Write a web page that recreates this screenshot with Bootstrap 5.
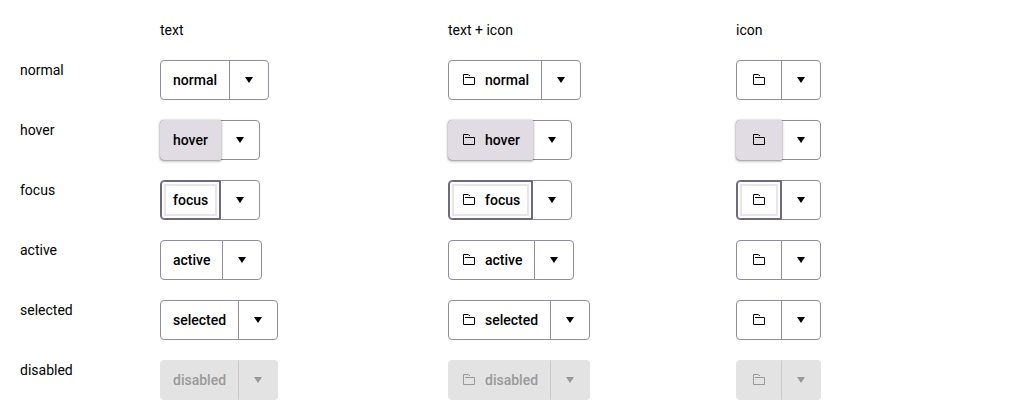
<!DOCTYPE html>
<html lang="en">
<head>
<meta charset="utf-8">
<meta name="viewport" content="width=device-width, initial-scale=1">
<title>Split button states</title>
<link href="https://cdn.jsdelivr.net/npm/bootstrap@5.3.0/dist/css/bootstrap.min.css" rel="stylesheet">
<style>
  body { font-family: Roboto, "Liberation Sans", sans-serif; font-size: 14px; line-height: 20px; color: #000; background: #fff; overflow: hidden; }
  .states { display: grid; grid-template-columns: 140px repeat(3, 288px); grid-template-rows: 20px repeat(6, 40px); gap: 20px 0; padding: 20px 0 0 20px; justify-items: start; }
  .split .btn {
    --bs-btn-font-size: 14px; --bs-btn-line-height: 20px; --bs-btn-font-weight: 500;
    --bs-btn-padding-x: 12px; --bs-btn-padding-y: 9px; --bs-btn-border-radius: 4px;
    --bs-btn-color: #000; --bs-btn-bg: #fff; --bs-btn-border-color: #908b9f;
    --bs-btn-disabled-color: #999; --bs-btn-disabled-bg: #e3e3e3; --bs-btn-disabled-border-color: #e3e3e3; --bs-btn-disabled-opacity: 1;
    height: 40px;
  }
  .split .btn-icon { --bs-btn-padding-x: 14px; }
  .split .toggle { --bs-btn-padding-x: 14px; width: 40px; }
  .split .is-hover { background: #e1dce3; border-color: #e1dce3; box-shadow: 0 0 1px rgba(0,0,0,.25), 0 1px 3px rgba(0,0,0,.45); z-index: 2; }
  .split .is-focus { border-color: #6e6880; box-shadow: inset 0 0 0 1px #6e6880, inset 0 0 0 3px #fff, inset 0 0 0 5px #e8e4ec; z-index: 2; }
  .split .toggle:disabled { border-left-color: #c9c9c9; }
  .split svg { display: block; flex: none; }
</style>
</head>
<body>
<svg width="0" height="0" class="position-absolute" aria-hidden="true">
  <symbol id="folder" viewBox="0 0 16 16"><path d="M4 5.5H13.5V12.5H2.5V2.5H7.3L8 3.5H9" fill="none" stroke="currentColor"/></symbol>
  <symbol id="caret" viewBox="0 0 10 16"><path d="M1 5H9L5 11Z" fill="currentColor"/></symbol>
</svg>
<main class="states" id="states">
  <div></div><div>text</div><div>text + icon</div><div>icon</div>
</main>
<script>
  const icon = '<svg width="16" height="16"><use href="#folder"/></svg>';
  const caret = '<svg width="10" height="16"><use href="#caret"/></svg>';
  const grid = document.getElementById('states');
  for (const state of ['normal', 'hover', 'focus', 'active', 'selected', 'disabled']) {
    const off = state === 'disabled' ? 'disabled' : '';
    const button = (content, extra) => `<div class="btn-group split">
      <button type="button" class="btn d-flex align-items-center gap-2 is-${state} ${extra}" ${off} aria-label="${state}">${content}</button>
      <button type="button" class="btn toggle d-flex align-items-center justify-content-center" ${off} aria-label="Menu">${caret}</button></div>`;
    grid.insertAdjacentHTML('beforeend', `<div>${state}</div>` +
      button(`<span>${state}</span>`, '') + button(`${icon}<span>${state}</span>`, '') + button(icon, 'btn-icon'));
  }
</script>
<script src="https://cdn.jsdelivr.net/npm/bootstrap@5.3.0/dist/js/bootstrap.bundle.min.js"></script>
</body>
</html>
